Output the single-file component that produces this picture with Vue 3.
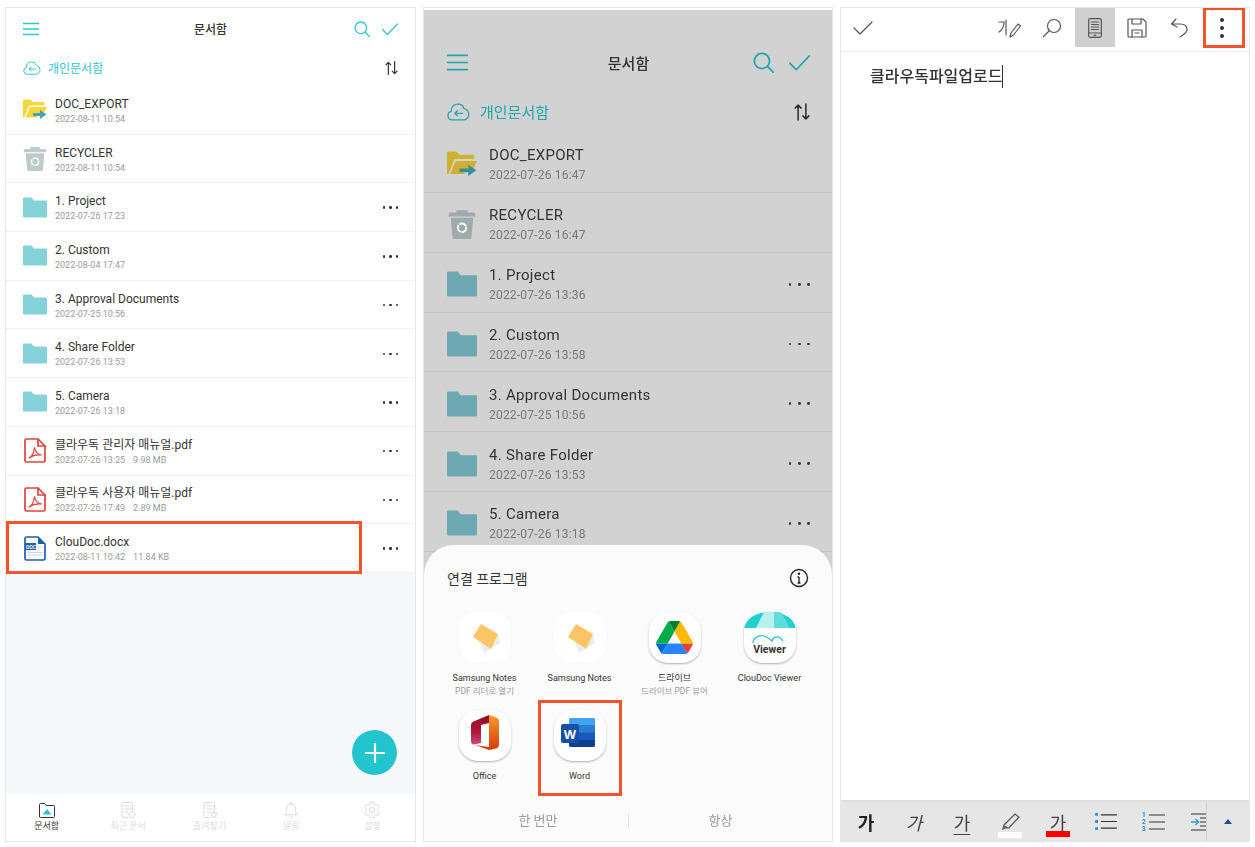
<template>
  <div class="page">
    <svg class="sprite" width="0" height="0" aria-hidden="true">
      <symbol id="i-menu" viewBox="0 0 16 16"><path class="s-teal" d="M0 2.500h16M0 8h16M0 13.500h16" /></symbol>
      <symbol id="i-search" viewBox="0 0 16 16"><circle class="s-teal" cx="6.800" cy="6.800" r="5.800" /><path class="s-teal" d="M11 11l4.600 4.600" /></symbol>
      <symbol id="i-check" viewBox="0 0 16 16"><path class="s-teal" d="M.5 8.500l5 5L15.500 3" /></symbol>
      <symbol id="i-cloud" viewBox="0 0 18 14"><path class="s-teal thin" d="M4.500 13.200H4a3.400 3.400 0 0 1-.6-6.700A5 5 0 0 1 8.600.8a4.600 4.600 0 0 1 4.600 3.600 4.500 4.500 0 0 1 .4 8.800z" /><path class="s-teal thin" d="M12.200 8H6.400M8.200 6L6.200 8l2 2" /></symbol>
      <symbol id="i-sort" viewBox="0 0 14 14"><path class="s-ink" d="M3.600 14V1M1 3.600L3.600 1l2.600 2.600M10.400 0v13M7.800 10.400l2.600 2.600 2.600-2.600" /></symbol>
      <symbol id="i-folder" viewBox="0 0 24 20"><path class="f-folder" d="M1 0h7.500L11 3h12a1 1 0 0 1 1 1v15a1 1 0 0 1-1 1H1a1 1 0 0 1-1-1V1a1 1 0 0 1 1-1z" /></symbol>
      <symbol id="i-open" viewBox="0 0 24 20">
        <path class="f-open" d="M0 1a1 1 0 0 1 1-1h6.500L10 2.500h10.500a1 1 0 0 1 1 1V6H6L1.200 18H0z" />
        <path class="f-open" d="M7 7.500h17L21 14h-7v4H2.500z" />
        <path class="f-arrow" d="M10 13.500h7V10.500l6.500 4.500-6.500 4.500v-3h-7z" />
      </symbol>
      <symbol id="i-trash" viewBox="0 0 22 24">
        <path class="f-trash" d="M6.500 1h9v1.800h5.500L22 6H0l1-3.200h5.500z" />
        <path class="f-trash" d="M2 7h18l-1.500 16a1 1 0 0 1-1 1H4.500a1 1 0 0 1-1-1z" />
        <circle class="s-white" cx="11" cy="15" r="3.400" stroke-dasharray="5 2" />
      </symbol>
      <symbol id="i-pdf" viewBox="0 0 22 25">
        <path class="s-red" d="M2.500 1H14l7 7v14.500a1.500 1.500 0 0 1-1.500 1.500h-17A1.500 1.500 0 0 1 1 22.500v-20A1.500 1.500 0 0 1 2.500 1z" />
        <path class="s-red" d="M14 1v7h7" />
        <path class="s-red hair" d="M5 20c3-1.500 5-6 5.500-10.500.800 4 3.500 7 7 7.500-4-.500-9 .500-12.500 3z" />
      </symbol>
      <symbol id="i-doc" viewBox="0 0 22 25">
        <path class="s-blue" d="M2.500 1H14l7 7v14.500a1.500 1.500 0 0 1-1.500 1.500h-17A1.500 1.500 0 0 1 1 22.500v-20A1.500 1.500 0 0 1 2.500 1z" />
        <path class="f-blue" d="M14 1l7 7h-7z" />
        <rect class="f-blue" x="1" y="7" width="11" height="7" />
        <path class="s-grey" d="M4 16.500h14M4 19h14M13.500 11h5" />
      </symbol>
      <symbol id="i-tab-box" viewBox="0 0 18 18">
        <path class="s-cur" d="M1.500 15.500V3.500a1 1 0 0 1 1-1h4l1.500 2h7.500a1 1 0 0 1 1 1v10a1 1 0 0 1-1 1h-13a1 1 0 0 1-1-1z" />
        <path class="f-tab" d="M4.500 13.500L9 8l4.500 5.500z" />
      </symbol>
      <symbol id="i-tab-recent" viewBox="0 0 18 18">
        <path class="s-cur" d="M8.500 16.500H4a1 1 0 0 1-1-1v-13a1 1 0 0 1 1-1h8.500a1 1 0 0 1 1 1v6.500M5.500 5h6M5.500 8h6M5.500 11h3" />
        <circle class="s-cur" cx="13" cy="13.500" r="3" />
      </symbol>
      <symbol id="i-tab-star" viewBox="0 0 18 18">
        <path class="s-cur" d="M8.500 16.500H4a1 1 0 0 1-1-1v-13a1 1 0 0 1 1-1h8.500a1 1 0 0 1 1 1v6.500M5.500 5h6M5.500 8h6M5.500 11h3" />
        <path class="s-cur" d="M13 10l1 2.200 2.400.300-1.700 1.600.400 2.400-2.100-1.200-2.100 1.200.400-2.400-1.700-1.600 2.400-.300z" />
      </symbol>
      <symbol id="i-tab-bell" viewBox="0 0 18 18">
        <path class="s-cur" d="M3 13.500c1-1 1.500-2 1.500-4V7.500a4.500 4.500 0 0 1 9 0v2c0 2 .500 3 1.500 4zM9 1v2M7.500 16h3" />
      </symbol>
      <symbol id="i-tab-gear" viewBox="0 0 18 18">
        <path class="s-cur" d="M7.500 1h3l.500 2.300 1.700 1 2.200-.700 1.500 2.600-1.700 1.600v2.400l1.700 1.600-1.500 2.600-2.200-.700-1.700 1-.500 2.300h-3L7 14.700l-1.700-1-2.200.700-1.500-2.600L3.300 10.200V7.800L1.600 6.200l1.500-2.600 2.200.700 1.700-1z" />
        <circle class="s-cur" cx="9" cy="9" r="2.700" />
      </symbol>
    </svg>

    <section v-for="panel in browsers" :key="panel.id" class="phone browser" :class="`browser--${panel.id}`">
      <div class="browser-body">
        <header class="bar">
          <svg class="hd-icon"><use href="#i-menu" /></svg>
          <h1 class="bar-title">문서함</h1>
          <div class="bar-actions">
            <svg class="hd-icon"><use href="#i-search" /></svg>
            <svg class="hd-icon"><use href="#i-check" /></svg>
          </div>
        </header>
        <div class="location">
          <svg class="cloud"><use href="#i-cloud" /></svg>
          <span class="location-name">개인문서함</span>
          <svg class="sort"><use href="#i-sort" /></svg>
        </div>
        <ul class="files">
          <li v-for="row in panel.rows" :key="row.name" class="file">
            <svg class="file-icon">
              <use :href="`#i-${row.icon}`" />
              <text v-if="row.icon === 'doc'" class="doc-mark" x="3" y="12.500">DOC</text>
            </svg>
            <div class="file-text">
              <div class="file-name">{{ row.name }}</div>
              <div class="file-meta">
                <span>{{ row.date }}</span>
                <span v-if="row.size" class="file-size">{{ row.size }}</span>
              </div>
            </div>
            <div v-if="row.more" class="more"><i /><i /><i /></div>
            <div v-if="row.marked" class="mark mark--file" />
          </li>
        </ul>

        <template v-if="panel.id === 'docs'">
          <div class="fill" />
          <button class="fab" type="button">
            <svg viewBox="0 0 20 20" width="20" height="20"><path d="M10 1v18M1 10h18" /></svg>
          </button>
          <nav class="tabs">
            <div v-for="tab in tabs" :key="tab.label" class="tab" :class="{ 'tab--on': tab.on }">
              <svg class="tab-icon"><use :href="`#i-tab-${tab.icon}`" /></svg>
              <span>{{ tab.label }}</span>
            </div>
          </nav>
        </template>

        <div v-else class="sheet">
          <div class="sheet-head">
            <span>연결 프로그램</span>
            <svg viewBox="0 0 20 20" width="20" height="20" class="info">
              <circle cx="10" cy="10" r="8.500" />
              <path d="M10 9v6M8.500 15h3M8.500 9H10" />
              <circle cx="10" cy="5.800" r="1.200" class="info-dot" />
            </svg>
          </div>
          <div class="apps">
            <div v-for="app in apps" :key="app.id" class="app">
              <div class="app-icon" :class="{ 'app-icon--flat': app.art === 'notes' }">
                <svg v-if="app.art === 'notes'" viewBox="0 0 52 52" width="52" height="52">
                  <path d="M39 22l2 9-16 10-4-10z" fill="#ececec" />
                  <path d="M22 12l17 10-7 15-18-12z" fill="#fbc565" />
                </svg>
                <svg v-else-if="app.art === 'drive'" viewBox="0 0 87.300 78" width="37" height="33">
                  <path d="m6.600 66.850 3.850 6.650c.8 1.400 1.950 2.500 3.300 3.300l13.750-23.800h-27.500c0 1.550.4 3.100 1.200 4.500z" fill="#0066da" />
                  <path d="m43.650 25-13.750-23.800c-1.350.8-2.500 1.900-3.300 3.300l-25.400 44a9.060 9.060 0 0 0 -1.200 4.500h27.500z" fill="#00ac47" />
                  <path d="m73.550 76.800c1.350-.8 2.500-1.900 3.300-3.300l1.600-2.750 7.650-13.250c.8-1.400 1.200-2.950 1.200-4.500h-27.502l5.852 11.500z" fill="#ea4335" />
                  <path d="m43.650 25 13.750-23.800c-1.350-.8-2.900-1.200-4.500-1.200h-18.500c-1.600 0-3.150.45-4.500 1.200z" fill="#00832d" />
                  <path d="m59.800 53h-32.300l-13.750 23.800c1.350.8 2.900 1.200 4.500 1.200h50.800c1.600 0 3.150-.45 4.500-1.200z" fill="#2684fc" />
                  <path d="m73.400 26.500-12.700-22c-.8-1.400-1.950-2.500-3.300-3.300l-13.750 23.800 16.150 28h27.450c0-1.550-.4-3.100-1.200-4.500z" fill="#ffba00" />
                </svg>
                <template v-else-if="app.art === 'viewer'">
                  <svg class="viewer-art" viewBox="0 0 52 52" width="52" height="52">
                    <path d="M0 16C3 5 13 0 26 0s23 5 26 16z" fill="#22cfd2" />
                    <path d="M12 16L20 0h12l2 16z" fill="#b8f0ee" />
                    <path d="M30 16L30 0h7l9 16z" fill="#5fdcdc" />
                    <path d="M9 31c0-6 9-10 15-5 2 1 3 2 4 3 1-4 7-7 11 0" fill="none" stroke="#27c3cc" stroke-width="1.300" />
                  </svg>
                  <span class="viewer-word">Viewer</span>
                </template>
                <svg v-else-if="app.art === 'office'" viewBox="0 0 52 52" width="52" height="52">
                  <defs>
                    <linearGradient id="office-left" x1="0" y1="0" x2="0" y2="1">
                      <stop offset="0" stop-color="#8e0f25" />
                      <stop offset="0.6" stop-color="#b3173a" />
                      <stop offset="1" stop-color="#c2508f" />
                    </linearGradient>
                    <linearGradient id="office-right" x1="0" y1="0" x2="0" y2="1">
                      <stop offset="0" stop-color="#f59a2f" />
                      <stop offset="1" stop-color="#d83b01" />
                    </linearGradient>
                  </defs>
                  <path d="M12 16a4 4 0 0 1 2.500-3.500L30 6v8l-8 2v18l-7 1.500A3 3 0 0 1 12 33z" fill="url(#office-left)" />
                  <path d="M30 6l7 2.500a4 4 0 0 1 3 4v23a4 4 0 0 1-3 4L30 41l-14-5 14 2V6z" fill="url(#office-right)" />
                </svg>
                <svg v-else viewBox="0 0 52 52" width="52" height="52">
                  <rect x="15" y="9" width="26" height="29" rx="2" fill="#185abd" />
                  <path d="M15 11a2 2 0 0 1 2-2h22a2 2 0 0 1 2 2v5H15z" fill="#41a5ee" />
                  <rect x="15" y="16" width="26" height="7.500" fill="#2b7cd3" />
                  <path d="M15 31h26v5a2 2 0 0 1-2 2H17a2 2 0 0 1-2-2z" fill="#103f91" />
                  <rect x="7" y="15" width="18" height="19" rx="2" fill="#1a4fa8" />
                  <text class="word-mark" x="16" y="29.500" text-anchor="middle">W</text>
                </svg>
              </div>
              <div class="app-name">{{ app.name }}</div>
              <div v-if="app.sub" class="app-sub">{{ app.sub }}</div>
              <div v-if="app.marked" class="mark mark--app" />
            </div>
          </div>
          <div class="sheet-actions">
            <span>한 번만</span>
            <span>항상</span>
          </div>
        </div>
      </div>
    </section>

    <section class="phone editor">
      <header class="edit-bar">
        <svg class="edit-check" viewBox="0 0 20 16" width="20" height="16"><path d="M1 8l6 6L19 2" /></svg>
        <div class="edit-tools">
          <button class="tool" type="button">
            <svg viewBox="0 0 24 22" width="24" height="22">
              <path d="M1 5h5c0 5-2 8-5 10M8 3v15M12 20l1-4 7-9 2.500 2-7 9z" />
            </svg>
          </button>
          <button class="tool" type="button">
            <svg viewBox="0 0 20 20" width="20" height="20"><circle cx="12" cy="8" r="6.500" /><path d="M7.500 12.500L1.500 18.500" /></svg>
          </button>
          <button class="tool tool--on" type="button">
            <svg viewBox="0 0 14 20" width="14" height="20">
              <rect x=".7" y=".7" width="12.600" height="18.600" rx="1.500" />
              <path d="M3.500 4h7M3.500 6.500h7M3.500 9h7M3.500 11.500h7M.7 15h12.600M6 17.300h2" />
            </svg>
          </button>
          <button class="tool" type="button">
            <svg viewBox="0 0 20 20" width="20" height="20">
              <path d="M2 1h14l3 3v14a1 1 0 0 1-1 1H2a1 1 0 0 1-1-1V2a1 1 0 0 1 1-1z" />
              <path d="M5 1v5h9V1M5 19v-7h10v7M8 15h4" />
            </svg>
          </button>
          <button class="tool" type="button">
            <svg viewBox="0 0 20 20" width="20" height="20"><path d="M6 1L1.500 6 7 9M2 6h8c4 0 7 2 7 5.500S14 16 10 19" /></svg>
          </button>
          <button class="tool" type="button">
            <div class="kebab"><i /><i /><i /></div>
          </button>
        </div>
        <div class="mark mark--tool" />
      </header>

      <div class="edit-page">
        <span class="edit-text">클라우독파일업로드</span><span class="caret" />
      </div>

      <footer class="format-bar">
        <div class="format-tools">
          <div class="fmt fmt--bold">가</div>
          <div class="fmt fmt--italic">가</div>
          <div class="fmt fmt--under">가</div>
          <div class="fmt">
            <svg viewBox="0 0 26 32" width="26" height="32">
              <path class="pen" d="M7 19L18 8l4 3-10 11H8l-2 1z" />
              <path class="pen-tip" d="M7 19l5 3H8l-3 2z" />
              <rect x="1" y="26" width="24" height="6" fill="#fff" />
            </svg>
          </div>
          <div class="fmt fmt--red">가</div>
          <div class="fmt">
            <svg viewBox="0 0 24 18" width="23" height="17">
              <path class="fmt-line" d="M6 2h17M6 9h17M6 16h17" />
              <path class="fmt-dot" d="M0 0h3v3H0zM0 7.500h3v3H0zM0 15h3v3H0z" />
            </svg>
          </div>
          <div class="fmt">
            <svg viewBox="0 0 24 20" width="24" height="20">
              <path class="fmt-line" d="M7 3h16M7 10h16M7 17h16" />
              <text class="fmt-num" x="0" y="5">1</text>
              <text class="fmt-num" x="0" y="12">2</text>
              <text class="fmt-num" x="0" y="19">3</text>
            </svg>
          </div>
          <div class="fmt fmt--clip">
            <svg viewBox="0 0 22 20" width="22" height="20">
              <path class="fmt-line" d="M0 2h15M0 18h15M9 6h6M9 10h6M9 14h6" />
              <path class="fmt-arrow" d="M0 10h7M4.500 7L7.500 10l-3 3" />
            </svg>
          </div>
        </div>
        <div class="format-toggle"><span class="triangle" /></div>
      </footer>
    </section>
  </div>
</template>

<script setup>
const docRows = [
  { icon: "open", name: "DOC_EXPORT", date: "2022-08-11 10:54" },
  { icon: "trash", name: "RECYCLER", date: "2022-08-11 10:54" },
  { icon: "folder", name: "1. Project", date: "2022-07-26 17:23", more: true },
  { icon: "folder", name: "2. Custom", date: "2022-08-04 17:47", more: true },
  { icon: "folder", name: "3. Approval Documents", date: "2022-07-25 10:56", more: true },
  { icon: "folder", name: "4. Share Folder", date: "2022-07-26 13:53", more: true },
  { icon: "folder", name: "5. Camera", date: "2022-07-26 13:18", more: true },
  { icon: "pdf", name: "클라우독 관리자 매뉴얼.pdf", date: "2022-07-26 13:25", size: "9.98 MB", more: true },
  { icon: "pdf", name: "클라우독 사용자 매뉴얼.pdf", date: "2022-07-26 17:49", size: "2.89 MB", more: true },
  { icon: "doc", name: "ClouDoc.docx", date: "2022-08-11 10:42", size: "11.84 KB", more: true, marked: true }
];

const chooserRows = [
  { icon: "open", name: "DOC_EXPORT", date: "2022-07-26 16:47" },
  { icon: "trash", name: "RECYCLER", date: "2022-07-26 16:47" },
  { icon: "folder", name: "1. Project", date: "2022-07-26 13:36", more: true },
  { icon: "folder", name: "2. Custom", date: "2022-07-26 13:58", more: true },
  { icon: "folder", name: "3. Approval Documents", date: "2022-07-25 10:56", more: true },
  { icon: "folder", name: "4. Share Folder", date: "2022-07-26 13:53", more: true },
  { icon: "folder", name: "5. Camera", date: "2022-07-26 13:18", more: true }
];

const browsers = [
  { id: "docs", rows: docRows },
  { id: "chooser", rows: chooserRows }
];

const tabs = [
  { icon: "box", label: "문서함", on: true },
  { icon: "recent", label: "최근 문서" },
  { icon: "star", label: "즐겨찾기" },
  { icon: "bell", label: "알림" },
  { icon: "gear", label: "설정" }
];

const apps = [
  { id: "notes-pdf", art: "notes", name: "Samsung Notes", sub: "PDF 리더로 열기" },
  { id: "notes", art: "notes", name: "Samsung Notes" },
  { id: "drive", art: "drive", name: "드라이브", sub: "드라이브 PDF 뷰어" },
  { id: "viewer", art: "viewer", name: "ClouDoc Viewer" },
  { id: "office", art: "office", name: "Office" },
  { id: "word", art: "word", name: "Word", marked: true }
];
</script>

<style>
body {
  background: #fff;
  overflow: hidden;
}
</style>

<style scoped>
.page {
  box-sizing: border-box;
  color: #333;
  display: flex;
  filter: blur(0.35px);
  font-family: Roboto, "Noto Sans CJK KR", sans-serif;
  gap: 7px;
  height: 847px;
  padding: 7px 0 5px 5px;
  position: relative;
  width: 1255px;
}

.sprite {
  left: 0;
  position: absolute;
  top: 0;
}

.phone {
  background: #fff;
  border: 1px solid #e6e6e6;
  box-sizing: border-box;
  flex: none;
  height: 835px;
  overflow: hidden;
  position: relative;
  width: 411px;
}

.browser--chooser,
.editor {
  width: 410px;
}

/* sprite paints */
.s-teal,
.s-ink,
.s-white,
.s-red,
.s-blue,
.s-grey,
.s-cur {
  fill: none;
  stroke-linecap: round;
  stroke-linejoin: round;
}

.s-teal {
  stroke: var(--teal);
  stroke-width: 1.300;
}

.s-teal.thin {
  stroke-width: 1;
}

.s-ink {
  stroke: var(--ink);
  stroke-width: 1.300;
}

.s-white {
  stroke: #fff;
  stroke-width: 1.500;
}

.s-red {
  stroke: #e2413d;
  stroke-width: 1.700;
}

.s-red.hair {
  stroke-width: 1.200;
}

.s-blue {
  stroke: #1f5fae;
  stroke-width: 1.700;
}

.s-grey {
  stroke: #ccd3da;
  stroke-width: 1;
}

.s-cur {
  stroke: currentColor;
  stroke-width: 1;
}

.f-folder {
  fill: var(--folder);
}

.f-open {
  fill: var(--open);
}

.f-arrow {
  fill: var(--arrow);
}

.f-trash {
  fill: var(--trash);
}

.f-blue {
  fill: #1f5fae;
}

.f-tab {
  fill: #25c4cc;
}

.doc-mark {
  fill: #fff;
  font-family: "Liberation Sans", sans-serif;
  font-size: 4.500px;
  font-weight: 700;
}

/* file browsers */
.browser {
  --row-h: 48.700px;
  --hd: 16px;
  --pad-l: 17px;
  --pad-r: 17px;
  --icon-w: 24px;
  --icon-h: 25px;
  --text-gap: 8px;
  --teal: #2cc8cf;
  --ink: #333;
  --folder: #85d2db;
  --open: #f8d63a;
  --arrow: #3fa7ae;
  --trash: #bfcbca;
  --line: #f1f2f3;
  --muted: #9a9a9a;
}

.browser--chooser {
  --row-h: 59.850px;
  --hd: 21px;
  --pad-l: 23px;
  --pad-r: 21px;
  --icon-w: 30px;
  --icon-h: 30px;
  --text-gap: 12px;
  --teal: #1fa6a8;
  --ink: #2a2a2a;
  --folder: #6ea8b2;
  --open: #cfb12f;
  --arrow: #3c8e99;
  --trash: #9eaaab;
  --line: #c1c1c1;
  --muted: #777;
}

.browser-body {
  display: flex;
  flex-direction: column;
  height: 100%;
  position: relative;
}

.browser--chooser .browser-body {
  background: #d2d2d2;
  box-sizing: border-box;
  height: calc(100% - 2px);
  margin-top: 2px;
  padding-top: 24px;
}

.bar {
  align-items: center;
  display: grid;
  flex: none;
  grid-template-columns: 1fr auto 1fr;
  height: 41px;
  padding: 0 var(--pad-r) 0 var(--pad-l);
}

.browser--chooser .bar {
  height: 56px;
}

.hd-icon {
  display: block;
  height: var(--hd);
  width: var(--hd);
}

.bar-title {
  font-size: 12px;
  font-weight: 500;
  margin: 0;
}

.browser--chooser .bar-title {
  font-size: 15px;
}

.bar-actions {
  display: flex;
  gap: 12px;
  justify-content: flex-end;
}

.browser--chooser .bar-actions {
  gap: 15px;
}

.location {
  align-items: center;
  display: flex;
  flex: none;
  height: 37px;
  padding: 0 var(--pad-r) 0 var(--pad-l);
}

.browser--chooser .location {
  height: 43px;
}

.cloud {
  height: 14px;
  margin-right: 7px;
  width: 18px;
}

.browser--chooser .cloud {
  height: 18px;
  margin-right: 10px;
  width: 23px;
}

.location-name {
  color: var(--teal);
  flex: 1;
  font-size: 12px;
}

.browser--chooser .location-name {
  font-size: 15px;
}

.sort {
  height: 14px;
  width: 13px;
}

.browser--chooser .sort {
  height: 18px;
  width: 16px;
}

.files {
  flex: none;
  list-style: none;
  margin: 0;
  padding: 0;
}

.file {
  align-items: center;
  background: #fff;
  border-bottom: 1px solid var(--line);
  box-sizing: border-box;
  display: flex;
  height: var(--row-h);
  padding: 0 var(--pad-r) 0 var(--pad-l);
  position: relative;
}

.browser--chooser .file {
  background: transparent;
}

.file-icon {
  flex: none;
  height: var(--icon-h);
  margin-right: var(--text-gap);
  width: var(--icon-w);
}

.browser--chooser .file-icon {
  margin-top: 4px;
}

.file-text {
  flex: 1;
  min-width: 0;
  padding-top: 2px;
}

.browser--chooser .file-text {
  padding-top: 5px;
}

.file-name {
  font-size: 12px;
  line-height: 16px;
}

.file-meta {
  color: var(--muted);
  font-size: 9px;
  line-height: 14px;
}

.file-size {
  margin-left: 8px;
}

.browser--chooser .file-name {
  font-size: 15px;
  letter-spacing: 0.3px;
  line-height: 21px;
}

.browser--chooser .file-meta {
  font-size: 12px;
  letter-spacing: 0.2px;
  line-height: 18px;
}

.more {
  display: flex;
  gap: 4px;
  margin-top: 1px;
}

.more i {
  background: #333;
  border-radius: 50%;
  display: block;
  height: 2.500px;
  width: 2.500px;
}

.browser--chooser .more {
  gap: 6.500px;
  margin-top: 4px;
}

.browser--chooser .more i {
  height: 2.800px;
  width: 2.800px;
}

.browser--chooser {
  --pad-r: 22px;
}

.fill {
  background: #f5f8fa;
  flex: 1;
}

.fab {
  align-items: center;
  background: #22c4cd;
  border: 0;
  border-radius: 50%;
  bottom: 66px;
  display: flex;
  height: 45px;
  justify-content: center;
  padding: 0;
  position: absolute;
  right: 18px;
  width: 45px;
}

.fab path {
  fill: none;
  stroke: #fff;
  stroke-linecap: round;
  stroke-width: 2.200;
}

.tabs {
  background: #fff;
  display: flex;
  flex: none;
  height: 47px;
  padding: 0 2px 0 0;
}

.tab {
  align-items: center;
  color: #dcdcdc;
  display: flex;
  flex: 1;
  flex-direction: column;
  font-size: 9px;
  line-height: 12px;
  padding-top: 7px;
}

.tab--on {
  color: #333;
}

.tab-icon {
  height: 18px;
  margin-bottom: 1px;
  width: 18px;
}

/* open-with sheet */
.sheet {
  background: #fbfbfb;
  border-radius: 30px 30px 0 0;
  bottom: 0;
  height: 296px;
  left: 0;
  position: absolute;
  right: 0;
}

.sheet-head {
  align-items: center;
  display: flex;
  font-size: 14px;
  justify-content: space-between;
  padding: 23px 23px 0;
}

.info circle,
.info path {
  fill: none;
  stroke: #222;
  stroke-width: 1.400;
}

.info .info-dot {
  fill: #222;
  stroke: none;
}

.apps {
  display: grid;
  grid-auto-rows: 97.500px;
  grid-template-columns: repeat(4, 95px);
  padding: 24px 0 0 13px;
}

.app {
  align-items: center;
  display: flex;
  flex-direction: column;
  position: relative;
}

.app-icon {
  align-items: center;
  background: #fff;
  border-radius: 36%;
  box-shadow: 0 1px 2px rgba(0, 0, 0, 0.3);
  display: flex;
  flex: none;
  height: 51px;
  justify-content: center;
  margin-bottom: 9px;
  overflow: hidden;
  position: relative;
  width: 52px;
}

.app-icon--flat {
  box-shadow: none;
}

.viewer-art {
  left: 0;
  position: absolute;
  top: 0;
}

.viewer-word {
  color: #333;
  font-size: 10.500px;
  font-weight: 700;
  position: absolute;
  top: 31px;
}

.word-mark {
  fill: #fff;
  font-family: "Liberation Sans", sans-serif;
  font-size: 13px;
  font-weight: 700;
}

.app-name {
  font-size: 9px;
  line-height: 13px;
  white-space: nowrap;
}

.app-sub {
  color: #999;
  font-size: 8.500px;
  line-height: 12px;
  white-space: nowrap;
}

.sheet-actions {
  bottom: 13px;
  color: #9a9a9a;
  display: grid;
  font-size: 13px;
  grid-template-columns: 1fr 1fr;
  left: 0;
  line-height: 15px;
  position: absolute;
  right: 0;
  text-align: center;
}

.sheet-actions span:first-child {
  padding-left: 24px;
}

.sheet-actions span + span {
  border-left: 1px solid #e4e4e4;
  padding-right: 20px;
}

.mark {
  border: 3px solid #f4532a;
  box-sizing: border-box;
  pointer-events: none;
  position: absolute;
}

.mark--file {
  height: 53px;
  left: 0;
  top: -3px;
  width: 356px;
}

.mark--app {
  height: 96px;
  left: 6px;
  top: -10px;
  width: 84px;
}

.mark--tool {
  height: 41px;
  right: 4px;
  top: -1px;
  width: 42px;
}

/* editor */
.editor {
  display: flex;
  flex-direction: column;
}

.edit-bar {
  align-items: flex-start;
  border-bottom: 1px solid #ececec;
  box-sizing: border-box;
  display: flex;
  flex: none;
  height: 44px;
  justify-content: space-between;
  padding: 0 7px 0 12px;
  position: relative;
}

.edit-check {
  margin-top: 12px;
}

.edit-check path,
.tool path,
.tool rect,
.tool circle {
  fill: none;
  stroke: #555;
  stroke-linecap: round;
  stroke-linejoin: round;
  stroke-width: 1.200;
}

.edit-tools {
  display: flex;
  gap: 2.500px;
}

.tool {
  align-items: center;
  background: transparent;
  border: 0;
  display: flex;
  height: 39px;
  justify-content: center;
  padding: 0;
  width: 40px;
}

.tool--on {
  background: #cfcfcf;
}

.kebab {
  display: flex;
  flex-direction: column;
  gap: 4px;
}

.kebab i {
  background: #333;
  border-radius: 50%;
  display: block;
  height: 4px;
  width: 4px;
}

.edit-page {
  align-content: flex-start;
  align-items: center;
  display: flex;
  flex: 1;
  flex-wrap: wrap;
  padding: 13px 0 0 29px;
}

.edit-text {
  font-size: 16px;
  font-weight: 500;
  line-height: 23px;
}

.caret {
  background: #333;
  display: block;
  height: 23px;
  width: 1px;
}

.format-bar {
  background: #e6e6e6;
  border-top: 2px solid #dedede;
  box-sizing: border-box;
  display: flex;
  flex: none;
  height: 41px;
}

.format-tools {
  align-items: center;
  border-right: 1px solid #d2d2d2;
  display: flex;
  flex: 1;
  overflow: hidden;
  padding-left: 1px;
}

.fmt {
  align-items: center;
  color: #444;
  display: flex;
  flex: none;
  font-size: 18px;
  height: 100%;
  justify-content: center;
  width: 48px;
}

.fmt--bold {
  color: #222;
  font-weight: 700;
}

.fmt--italic {
  font-style: italic;
}

.fmt--under {
  text-decoration: underline;
  text-underline-offset: 4px;
}

.fmt--red {
  background: linear-gradient(#f00, #f00) center 29px / 24px 6px no-repeat;
}

.pen {
  fill: none;
  stroke: #555;
  stroke-width: 1.200;
}

.pen-tip {
  fill: #666;
}

.fmt-line {
  fill: none;
  stroke: #333;
  stroke-width: 1.200;
}

.fmt-dot {
  fill: #2a8fd8;
}

.fmt-num {
  fill: #2a8fd8;
  font-family: Roboto, sans-serif;
  font-size: 6.500px;
  font-weight: 700;
}

.fmt-arrow {
  fill: none;
  stroke: #2a9fd8;
  stroke-width: 1.300;
}

.format-toggle {
  align-items: center;
  display: flex;
  flex: none;
  justify-content: center;
  width: 42px;
}

.triangle {
  border-bottom: 5px solid #1f4f8f;
  border-left: 4.500px solid transparent;
  border-right: 4.500px solid transparent;
  height: 0;
  width: 0;
}
</style>
